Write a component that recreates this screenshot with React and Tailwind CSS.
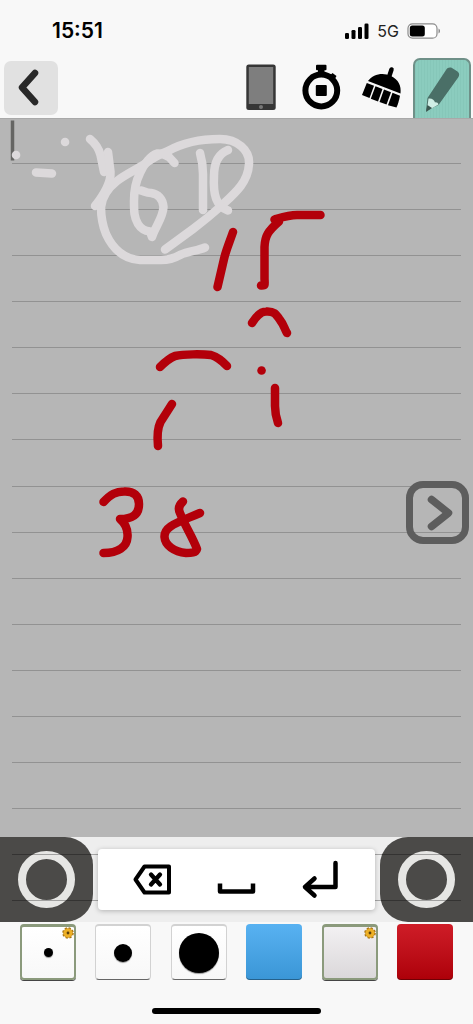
import clsx from 'clsx'

const whiteStrokes = [
  'M16 155h0.1',
  'M65 142h0.1',
  'M36 172.5L52 173.5',
  'M90 139C96 144 99 149 100.500 155L104 172',
  'M108 152L110.500 172C111 182 106 192 95 206',
  'M205 247.500C197 251 189 251 180 255C173 259 168 260 161 260H140C122 259 112 247 106 234C102 224 101 215 101 207C102 198 107 189 117 181C126 174 136 170 146 163C153 158 160 154 168 151C184 142 205 139 220 139C237 139 250 150 249 164C248 183 234 194 220 207C211 215 201 223 193 229L165 249.500',
  'M174.500 163L169 157C164 154 161 153 157 153.500C151 155 144 164 140 173C135 183 134 192 134 201C134 212 134 217 138 224C141 229 145 231 150 231.500L152 237C155 227 163 218 163.500 207C163 199 158 194 151 193C146 193 144 191 141 190.500',
  'M200 153C202 160 203 166 203 174V210',
  'M228 150C218 154 214 163 214 176C213 195 216 206 228 210.500',
]

const redStrokes = [
  'M233 232C230 241 226 250 224 259L217.500 287',
  'M320.500 215H297C289 215 283 217 274.500 219.500L279 221.500C268 231 265 236 264.500 247V279C265 286 265 285.500 261 285.500',
  'M252 323C257 315 261 311.500 266 311.500C274 311 276 314 280 320C284 325 284 328 287 333',
  'M160 367C165 362 170 358 175 356C184 354 202 354 211 355C218 357 222 361 227 366',
  'M261.500 370.500h0.1',
  'M275 388V406C275 413 276 417 278 423',
  'M172 404L160.500 422C157 429 157 436 158 446',
  'M103.500 502C111 494 116 491.500 124 491.500C134 491 139 496 139 504C139 514 133 519 120 519C127 525 128 531 127.500 537C127 547 118 553 103.500 553',
  'M183 501.500C179 505 178 509 180 513C185 526 192 536 197 549C196 553 191 553 186 553C174 552 165 545 164.500 537C164 526 177 523 200 513',
]

const swatches = [
  { label: 'Thin pen', type: 'dot', dot: 'size-[9px]', active: true },
  { label: 'Medium pen', type: 'dot', dot: 'size-[18px]' },
  { label: 'Thick pen', type: 'dot', dot: 'size-[40px]' },
  { label: 'Blue', fill: 'bg-linear-to-b from-[#58b2f2] to-[#3a96d6]' },
  { label: 'White', fill: 'bg-linear-to-b from-[#f2f0f2] to-[#dbd8da]', active: true },
  { label: 'Red', fill: 'bg-linear-to-b from-[#cf1c27] to-[#ad0008]' },
]

function StatusBar() {
  return (
    <div className="flex h-[58px] items-center justify-between pt-1 pr-8 pl-[52px] font-['Inter',sans-serif]">
      <span className="text-[21px] leading-6 font-semibold text-black">15:51</span>
      <div className="flex items-center gap-2">
        <svg width="24" height="16" viewBox="0 0 24 16" aria-hidden="true">
          <rect x="0" y="10" width="4" height="6" rx="1.300" />
          <rect x="6.500" y="7" width="4" height="9" rx="1.300" />
          <rect x="13" y="4" width="4" height="12" rx="1.300" />
          <rect x="19.500" y="0.500" width="4" height="15.500" rx="1.300" />
        </svg>
        <span className="text-[16px] leading-6 text-[#222]">5G</span>
        <svg width="34" height="16" viewBox="0 0 34 16" aria-hidden="true">
          <rect x="1" y="0.800" width="29" height="14.400" rx="4.500" fill="#fff" stroke="#8b8b8b" strokeWidth="1.200" />
          <rect x="2.800" y="2.600" width="15" height="10.800" rx="2.500" />
          <path d="M31.500 5.500c2 .8 2 4.200 0 5z" fill="#8b8b8b" />
        </svg>
      </div>
    </div>
  )
}

function Toolbar() {
  return (
    <div className="flex h-[60px] items-start justify-between pr-[2px] pl-1">
      <button type="button" aria-label="Back" className="mt-[3px] flex size-[54px] items-center justify-center rounded-[7px] bg-[#e1e1e1]">
        <svg width="54" height="54" viewBox="0 0 54 54" fill="none" stroke="#292929" strokeWidth="6.500" strokeLinecap="round" strokeLinejoin="round">
          <path d="M31 12L18 26.500L31 41" />
        </svg>
      </button>
      <div className="flex items-start">
        <button type="button" aria-label="Device" className="flex h-[60px] w-[60px] justify-center pt-[6px]">
          <svg width="30" height="47" viewBox="0 0 30 47">
            <rect x="0.300" y="0.500" width="29.400" height="45.500" rx="2.500" fill="#363636" />
            <rect x="2.800" y="3" width="24.400" height="37" fill="#7e7e7e" />
            <circle cx="15" cy="43" r="2" fill="#777" />
          </svg>
        </button>
        <button type="button" aria-label="Timer" className="flex h-[60px] w-[60px] justify-center pt-[6px]">
          <svg width="40" height="47" viewBox="0 0 40 47">
            <rect x="15" y="0.800" width="10.500" height="5.500" rx="1" />
            <rect x="17" y="4" width="6.500" height="6" />
            <path d="M29 11.500l2.500-2.500 4 3-2 3.500z" />
            <circle cx="20.300" cy="26.500" r="15.900" fill="none" stroke="#000" strokeWidth="6" />
            <rect x="14.800" y="21" width="11" height="11" rx="1" />
          </svg>
        </button>
        <button type="button" aria-label="Clear" className="flex h-[60px] w-[62px] justify-center pt-[6px]">
          <svg width="44" height="47" viewBox="0 0 44 47">
            <path d="M31.500 5.500L29 13" stroke="#000" strokeWidth="4.500" strokeLinecap="round" />
            <path d="M8 17C13 10 23 8 31 12C38.500 15.500 41.500 22 40.500 29.500Z" />
            <path d="M6.800 19L14 21.800L9.500 34L2 31Z" />
            <path d="M15.500 22.300L22.500 25L18 37.500L10.800 34.700Z" />
            <path d="M24 25.500L31 28.300L26.500 40.500L19.500 38Z" />
            <path d="M32.500 28.800L40 31.700C39 36.500 38 40 36.500 43.500L28 41.300Z" />
          </svg>
        </button>
        <button
          type="button"
          aria-label="Pen"
          aria-pressed="true"
          className="h-[60px] w-[58px] overflow-hidden rounded-t-[7px] border-2 border-b-0 border-[#6f9088] bg-[#8bccbe] bg-[repeating-linear-gradient(90deg,#86c7b9_0px,#86c7b9_1px,transparent_1px,transparent_3px)]"
        >
          <svg width="54" height="58" viewBox="0 0 54 58">
            <path d="M11 51L12.500 38L31 10C32.500 7.500 35 7 37 8L42.500 11.500C44.500 13 44.500 15 43.500 17L23.500 45Z" fill="#4a6f67" />
            <path d="M13.500 38.500C17 38 19.500 40 20 42.500C21.500 42 23 43 23.500 44.500L16.500 48.500L12.500 46Z" fill="#cfeee5" />
            <path d="M12.400 45L17 48L11 52Z" fill="#3c5750" />
          </svg>
        </button>
      </div>
    </div>
  )
}

function Paper() {
  return (
    <main className="relative min-h-[719px] flex-1 overflow-hidden bg-[#b6b6b6] shadow-[inset_0_1px_0_#a9a9a9]">
      <div className="absolute inset-x-3 top-0 flex h-[691px] flex-col">
        {Array.from({ length: 15 }, (_, i) => (
          <div key={i} className="flex-1 border-b border-[#929292]" />
        ))}
      </div>
      <svg
        className="absolute top-0 left-0"
        width="473"
        height="719"
        viewBox="0 118 473 719"
        fill="none"
        strokeLinecap="round"
        strokeLinejoin="round"
        role="img"
        aria-label="Handwriting"
      >
        <path d="M12.500 120.500V160.500" stroke="#656563" strokeWidth="3.500" strokeLinecap="butt" />
        <g stroke="#dcd9db" strokeWidth="8.500">
          {whiteStrokes.map((d) => <path key={d} d={d} />)}
        </g>
        <g stroke="#b3000a" strokeWidth="8.500">
          {redStrokes.map((d) => <path key={d} d={d} />)}
        </g>
      </svg>
      <button
        type="button"
        aria-label="Next page"
        className="absolute top-[363px] right-1 size-[63px] rounded-[17px] border-[7px] border-[#5d5d5d]"
      >
        <svg width="49" height="49" viewBox="0 0 49 49" fill="none" stroke="#5d5d5d" strokeWidth="7.500" strokeLinecap="round" strokeLinejoin="round">
          <path d="M18.500 11.500L35.500 25L18.500 38.500" />
        </svg>
      </button>
    </main>
  )
}

function RingButton({ label, side }) {
  return (
    <button
      type="button"
      aria-label={label}
      className={clsx(
        'flex h-[85px] w-[93px] items-center justify-center bg-[#4b4a48]',
        side === 'left' ? 'rounded-r-[28px]' : 'rounded-l-[28px]'
      )}
    >
      <span className="size-[57px] rounded-full border-[8px] border-[#e6e6e4]" />
    </button>
  )
}

function KeyBar() {
  return (
    <div className="relative flex h-[85px] items-center justify-between gap-[5px] bg-[#eeeeee]">
      <RingButton label="Left joystick" side="left" />
      <div className="z-10 flex h-[61px] flex-1 items-center justify-around rounded-[4px] bg-white px-3 shadow-[0_1px_5px_rgba(0,0,0,0.25)]">
        <button type="button" aria-label="Backspace">
          <svg width="40" height="40" viewBox="0 0 40 40" fill="none" stroke="#000" strokeLinejoin="round" strokeLinecap="round">
            <path d="M12.500 6.500H37V32.500H12.500L3.500 19.500Z" strokeWidth="4" />
            <path d="M19 14.500L28 24.500M28 14.500L19 24.500" strokeWidth="4.300" />
          </svg>
        </button>
        <button type="button" aria-label="Space">
          <svg width="40" height="40" viewBox="0 0 40 40" fill="none" stroke="#000" strokeWidth="4.500" strokeLinejoin="round">
            <path d="M4 23.500V31.500H37V23.500" />
          </svg>
        </button>
        <button type="button" aria-label="Enter">
          <svg width="40" height="40" viewBox="0 0 40 40" fill="none" stroke="#000" strokeWidth="4.500" strokeLinejoin="round" strokeLinecap="round">
            <path d="M34.500 3V27H4M13.500 18.500L4 27L13.500 35.500" />
          </svg>
        </button>
      </div>
      <RingButton label="Right joystick" side="right" />
      <div className="pointer-events-none absolute inset-x-3 top-[17px] h-[47px] border-y border-black/30" />
    </div>
  )
}

function Gear() {
  return (
    <svg className="absolute top-0 right-0" width="12" height="12" viewBox="0 0 12 12">
      <circle cx="6" cy="6" r="4.900" fill="none" stroke="#a87412" strokeWidth="1.800" strokeDasharray="2.200 1.650" />
      <circle cx="6" cy="6" r="4.600" fill="#eeb025" stroke="#b98318" strokeWidth="0.500" />
      <circle cx="6" cy="6" r="1.400" fill="#5b3f0c" />
    </svg>
  )
}

function Palette() {
  return (
    <div className="flex justify-between px-5 pt-[2px]">
      {swatches.map((s) => (
        <button
          key={s.label}
          type="button"
          aria-label={s.label}
          aria-pressed={!!s.active}
          className={clsx(
            'relative flex size-[56px] items-center justify-center rounded-[4px]',
            s.fill || 'bg-linear-to-b from-white to-[#f8f8f8]',
            s.active && 'border-2 border-t-[3px] border-[#8b9a7c] shadow-[0_1px_0_#444]',
            !s.active && s.type === 'dot' && 'border border-t-2 border-[#d2d2d2] border-b-[#666]',
            !s.active && !s.type && 'shadow-[inset_0_-1px_0_rgba(0,0,0,0.35)]'
          )}
        >
          {s.dot && <span className={clsx('rounded-full bg-black shadow-[0_1px_1px_rgba(0,0,0,0.4)]', s.dot)} />}
          {s.active && <Gear />}
        </button>
      ))}
    </div>
  )
}

export default function App() {
  return (
    <div className="flex min-h-screen flex-col bg-[#f8f8f8]">
      <header>
        <StatusBar />
        <Toolbar />
      </header>
      <Paper />
      <KeyBar />
      <footer className="flex h-[102px] flex-col justify-between pb-[10px]">
        <Palette />
        <div className="mx-auto h-[6px] w-[169px] rounded-full bg-black" />
      </footer>
    </div>
  )
}
